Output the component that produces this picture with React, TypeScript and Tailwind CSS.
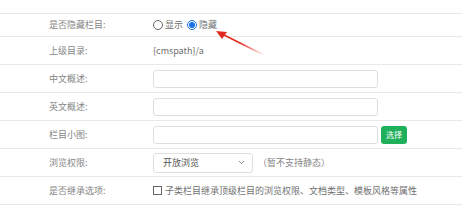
import { ChevronDown } from "lucide-react";

const FONT = { fontFamily: '"Noto Sans CJK SC", "Noto Sans", sans-serif' };

function Row({ label, h = "h-[28px]", children }: { label: string; h?: string; children: React.ReactNode }) {
  return (
    <div className={`flex items-center border-t border-[#e8e8e8] ${h}`}>
      <div className="w-[153px] shrink-0 pl-[49px] text-[9px] text-[#858585]">{label}</div>
      <div className="flex items-center text-[9px] text-[#6f6f6f]">{children}</div>
    </div>
  );
}

function TextBox() {
  return <div className="h-[18px] w-[225px] rounded-[3px] border border-[#dedede] bg-white" />;
}

export default function App() {
  return (
    <div className="relative h-[206px] w-[462px] overflow-hidden bg-white pt-[13px]" style={FONT}>
      <Row label="是否隐藏栏目:" h="h-[23px]">
        <span className="flex items-center gap-[2px]">
          <span className="h-[10px] w-[10px] rounded-full border border-[#666] bg-white" />
          <span>显示</span>
        </span>
        <span className="ml-[4px] flex items-center gap-[2px]">
          <span className="flex h-[10px] w-[10px] items-center justify-center rounded-full border border-[#1a73e8] bg-white">
            <span className="h-[6px] w-[6px] rounded-full bg-[#1a73e8]" />
          </span>
          <span>隐藏</span>
        </span>
      </Row>
      <Row label="上级目录:">
        <span>{"{cmspath}/a"}</span>
      </Row>
      <Row label="中文概述:">
        <TextBox />
      </Row>
      <Row label="英文概述:">
        <TextBox />
      </Row>
      <Row label="栏目小图:">
        <TextBox />
        <div className="ml-[3px] flex h-[18px] w-[26px] items-center justify-center rounded-[3px] bg-[#20b05c] text-[8px] text-white">
          选择
        </div>
      </Row>
      <Row label="浏览权限:">
        <div className="flex h-[20px] w-[100px] items-center justify-between rounded-[3px] border border-[#dedede] pl-[9px] pr-[6px] text-[#555]">
          <span>开放浏览</span>
          <ChevronDown size={9} strokeWidth={2.2} className="text-[#666]" />
        </div>
        <span className="ml-[5px] text-[#858585]">（暂不支持静态）</span>
      </Row>
      <Row label="是否继承选项:">
        <span className="mr-[3px] h-[9px] w-[9px] border border-[#666] bg-white" />
        <span>子类栏目继承顶级栏目的浏览权限、文档类型、模板风格等属性</span>
      </Row>
      <div className="border-t border-[#e8e8e8]" />
      <svg className="absolute left-0 top-0" width="462" height="206" viewBox="0 0 462 206">
        <defs>
          <linearGradient id="ar" x1="262" y1="54" x2="218" y2="32" gradientUnits="userSpaceOnUse">
            <stop offset="0" stopColor="#e83a2a" stopOpacity="0.1" />
            <stop offset="0.5" stopColor="#e02a1e" />
            <stop offset="1" stopColor="#e02a1e" />
          </linearGradient>
        </defs>
        <line x1="262" y1="54" x2="222" y2="34" stroke="url(#ar)" strokeWidth="1.6" strokeLinecap="round" />
        <polygon points="216,31 227,32 222,39" fill="#e02a1e" />
      </svg>
    </div>
  );
}
